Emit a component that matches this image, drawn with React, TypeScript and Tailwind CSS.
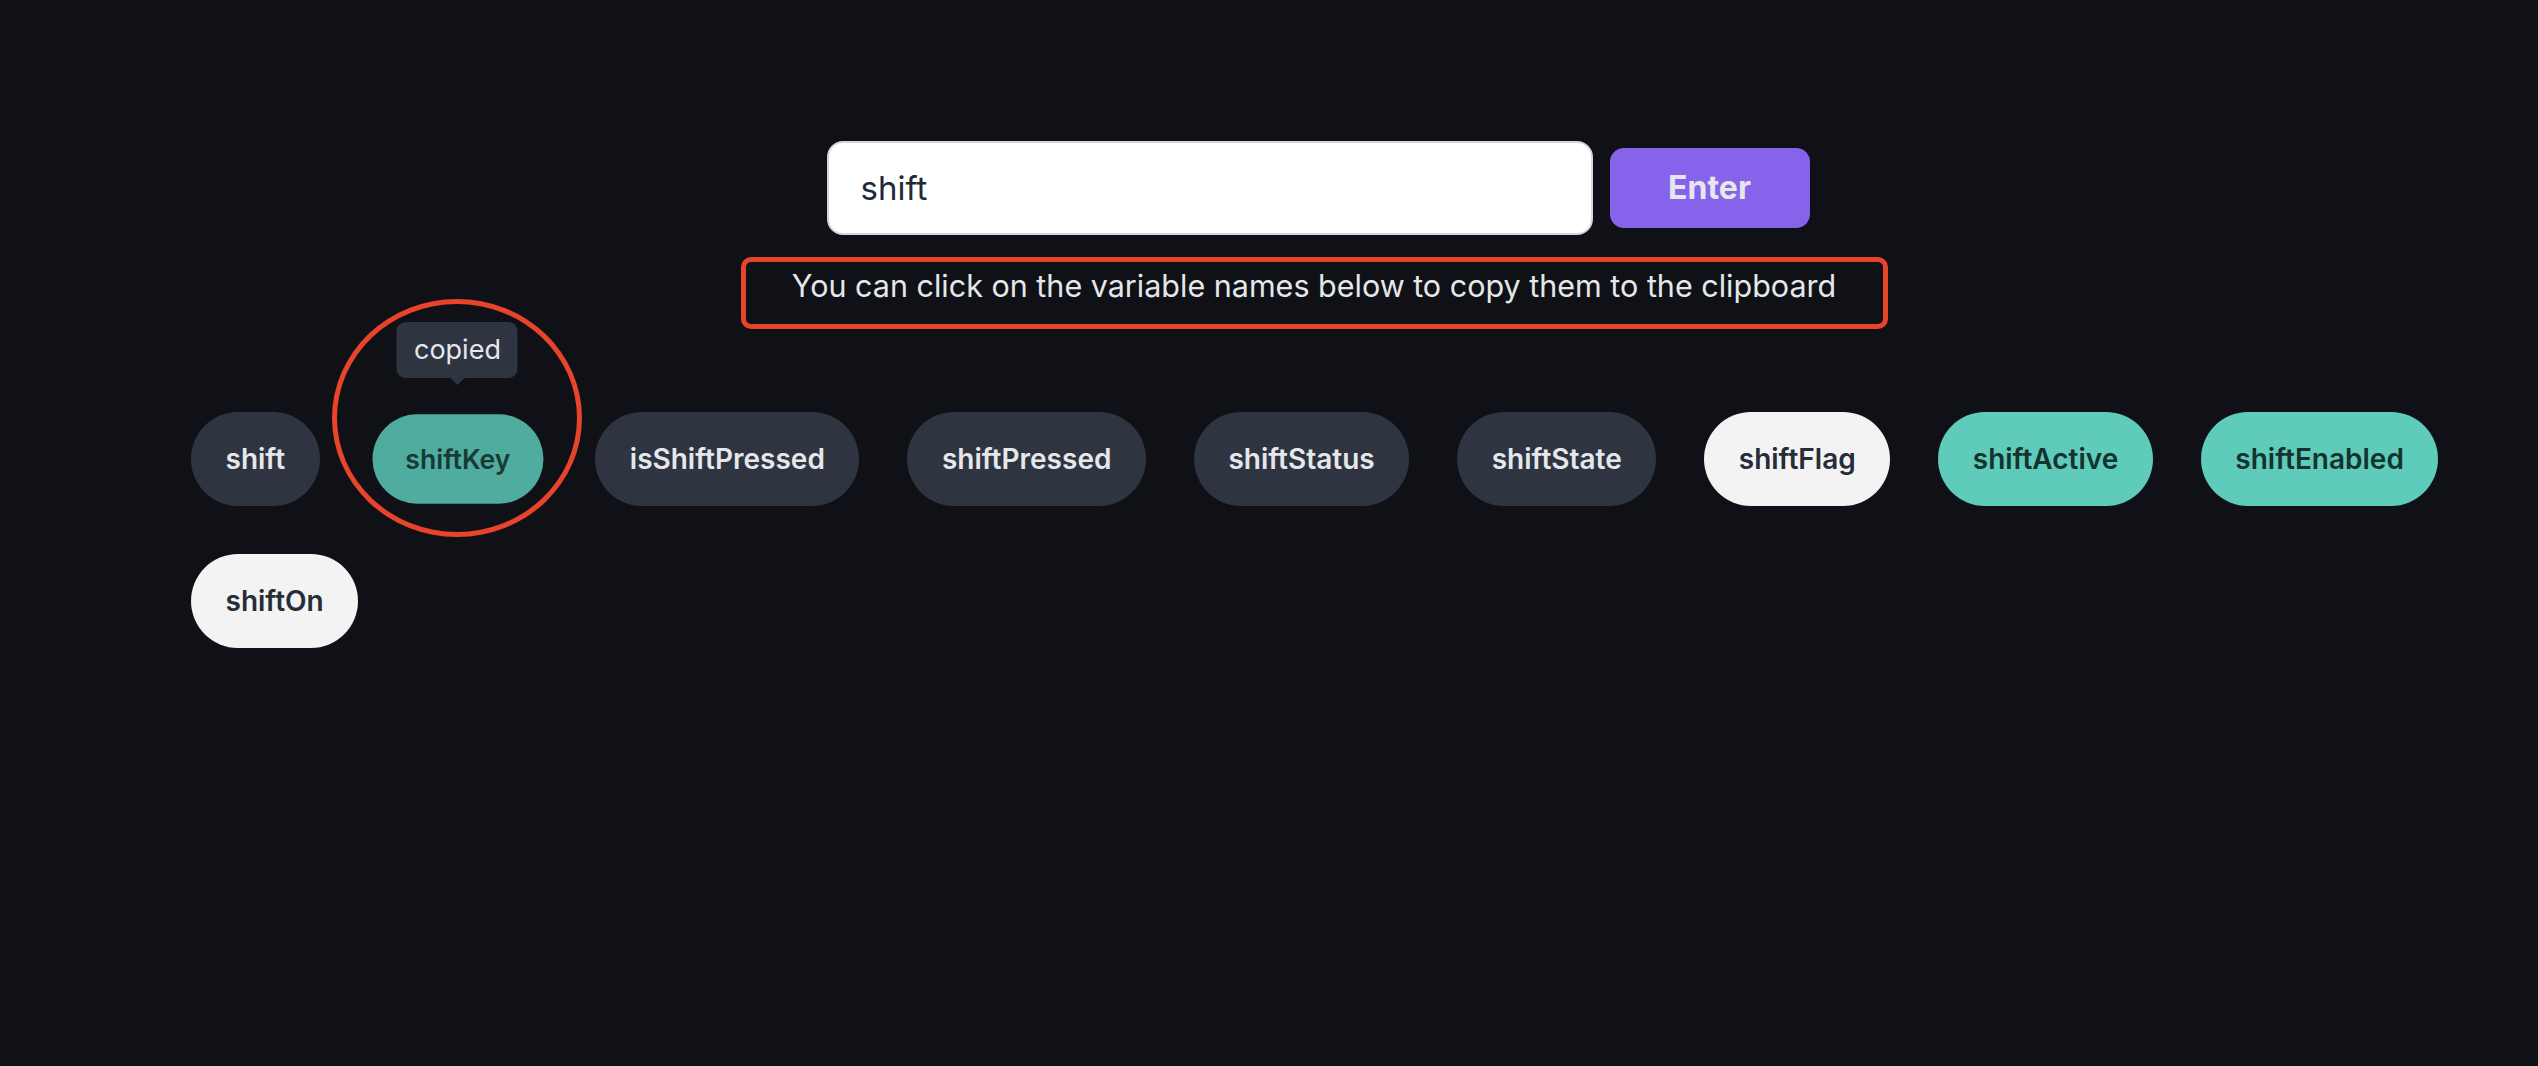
import { useState } from "react";

type Tone = "dark" | "teal" | "light" | "active";

const names: { name: string; tone: Tone }[] = [
  { name: "shift", tone: "dark" },
  { name: "shiftKey", tone: "active" },
  { name: "isShiftPressed", tone: "dark" },
  { name: "shiftPressed", tone: "dark" },
  { name: "shiftStatus", tone: "dark" },
  { name: "shiftState", tone: "dark" },
  { name: "shiftFlag", tone: "light" },
  { name: "shiftActive", tone: "teal" },
  { name: "shiftEnabled", tone: "teal" },
  { name: "shiftOn", tone: "light" },
];

const toneClass: Record<Tone, string> = {
  dark: "bg-[#2e3440] text-[#e5e7eb]",
  teal: "bg-[#5fcbba] text-[#15332e]",
  light: "bg-[#f3f3f3] text-[#262c38]",
  active: "bg-[#50ac9f] text-[#163a34] scale-95",
};

const App = () => {
  const [query, setQuery] = useState("shift");
  const [copied] = useState("shiftKey");

  return (
    <div className="min-h-screen w-full bg-[#0f1116] font-['Inter','Liberation_Sans',sans-serif]">
      <div className="flex flex-col items-center pl-[90px] pt-[141px]">
        <div className="flex items-center gap-[17px] ml-[8px]">
          <input
            value={query}
            onChange={(e) => setQuery(e.target.value)}
            className="w-[766px] h-[94px] rounded-[16px] border-2 border-[#d4d6da] bg-white pl-[32px] text-[33px] text-[#1f2937] outline-none"
          />
          <button className="w-[200px] h-[80px] rounded-[14px] bg-[#8763ec] text-[32px] font-bold text-[#e5e7eb]">
            Enter
          </button>
        </div>
        <div className="mt-[22px] w-[1147px] h-[72px] rounded-[10px] border-[5px] border-[#e8432b] text-center">
          <p className="text-[30.5px] leading-[48px] text-[#e5e7eb]">
            You can click on the variable names below to copy them to the clipboard
          </p>
        </div>
      </div>

      <div className="ml-[167px] mt-[59px] w-[2340px] flex flex-wrap">
        {names.map((item) => (
          <div key={item.name} className="relative m-6">
            {copied === item.name && (
              <>
                <div className="pointer-events-none absolute left-[-36px] top-[-113px] w-[250px] h-[238px] rounded-[50%] border-[5px] border-[#e8432b]" />
                <div className="absolute left-1/2 bottom-full mb-[34px] -translate-x-1/2 flex h-[56px] items-center rounded-[9px] bg-[#2e3440] px-[17px] text-[27px] text-[#e5e7eb]">
                  copied
                  <span className="absolute left-1/2 top-full -translate-x-1/2 border-x-[7px] border-t-[7px] border-x-transparent border-t-[#2e3440]" />
                </div>
              </>
            )}
            <button
              className={`h-[94px] rounded-full px-[34.5px] text-[28px] font-semibold ${toneClass[item.tone]}`}
            >
              {item.name}
            </button>
          </div>
        ))}
      </div>
    </div>
  );
};

export default App;
